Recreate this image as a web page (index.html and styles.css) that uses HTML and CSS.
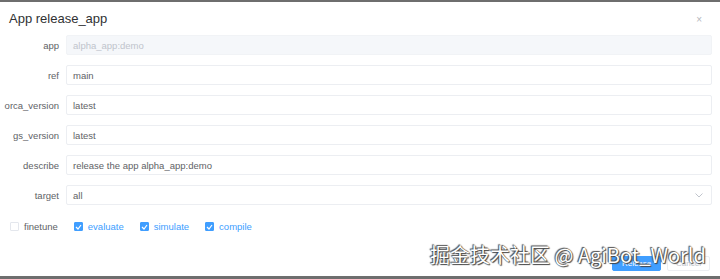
FILE: index.html
```html
<!DOCTYPE html>
<html lang="en">

<head>
    <meta charset="UTF-8">
    <meta name="viewport" content="width=device-width, initial-scale=1.0">
    <title>App release_app</title>
    <link rel="stylesheet" href="styles.css">
</head>

<body>
    <div class="dialog">
        <div class="dialog-header">
            <span class="dialog-title">App release_app</span>
            <span class="dialog-close">&#215;</span>
        </div>
        <form class="release-form">
            <div class="form-row">
                <label>app</label>
                <div class="field disabled">alpha_app:demo</div>
            </div>
            <div class="form-row">
                <label>ref</label>
                <div class="field">main</div>
            </div>
            <div class="form-row">
                <label>orca_version</label>
                <div class="field">latest</div>
            </div>
            <div class="form-row">
                <label>gs_version</label>
                <div class="field">latest</div>
            </div>
            <div class="form-row">
                <label>describe</label>
                <div class="field">release the app alpha_app:demo</div>
            </div>
            <div class="form-row">
                <label>target</label>
                <div class="field select">
                    <span>all</span>
                    <svg class="chevron" width="8" height="5" viewBox="0 0 8 5">
                        <path d="M0.5 0.5 L4 4 L7.5 0.5" fill="none" stroke="#c0c4cc" stroke-width="1"/>
                    </svg>
                </div>
            </div>
            <div class="checks">
                <span class="check"><span class="box"></span>finetune</span>
                <span class="check on"><span class="box"><svg width="7" height="6" viewBox="0 0 7 6"><path d="M1 3 L3 5 L6 1" fill="none" stroke="#fff" stroke-width="1.2"/></svg></span>evaluate</span>
                <span class="check on"><span class="box"><svg width="7" height="6" viewBox="0 0 7 6"><path d="M1 3 L3 5 L6 1" fill="none" stroke="#fff" stroke-width="1.2"/></svg></span>simulate</span>
                <span class="check on"><span class="box"><svg width="7" height="6" viewBox="0 0 7 6"><path d="M1 3 L3 5 L6 1" fill="none" stroke="#fff" stroke-width="1.2"/></svg></span>compile</span>
            </div>
        </form>
        <div class="dialog-footer">
            <button type="button" class="btn primary">Release</button>
            <button type="button" class="btn">Cancel</button>
        </div>
        <div class="watermark">掘金技术社区 @ AgiBot_World</div>
    </div>
</body>

</html>
```

FILE: styles.css
```css
body {
    margin: 0;
    font-family: "Liberation Sans", Arial, sans-serif;
    background-color: #fff;
}

.dialog {
    position: relative;
    height: 279px;
    box-sizing: border-box;
    border-top: 2px solid #6e6e6e;
    border-bottom: 3px solid #6e6e6e;
    background-color: #fff;
}

.dialog-header {
    display: flex;
    justify-content: space-between;
    align-items: center;
    padding: 8px 18px 0 9px;
    height: 17px;
}

.dialog-title {
    font-size: 13px;
    color: #303133;
}

.dialog-close {
    font-size: 10px;
    color: #b4b7bd;
    margin-top: 2px;
}

.release-form {
    padding-top: 8px;
}

.form-row {
    display: flex;
    align-items: center;
    height: 20px;
    margin-bottom: 10px;
}

.form-row label {
    width: 59px;
    padding-right: 7px;
    text-align: right;
    font-size: 9.5px;
    color: #606266;
}

.field {
    flex: 1;
    margin-right: 8px;
    height: 20px;
    box-sizing: border-box;
    border: 1px solid #eceef2;
    border-radius: 2px;
    padding: 0 6px;
    display: flex;
    align-items: center;
    font-size: 9.5px;
    color: #606266;
}

.field.disabled {
    background-color: #f5f7fa;
    border-color: #f1f3f6;
    color: #c0c4cc;
}

.field.select {
    justify-content: space-between;
}

.chevron {
    margin-right: 2px;
}

.checks {
    display: flex;
    align-items: center;
    padding: 6px 0 0 10px;
    gap: 16px;
}

.check {
    display: flex;
    align-items: center;
    font-size: 9.5px;
    color: #606266;
}

.check.on {
    color: #409eff;
}

.check .box {
    width: 9px;
    height: 9px;
    box-sizing: border-box;
    border: 1px solid #e4e7ed;
    border-radius: 1px;
    margin-right: 5px;
    display: flex;
    align-items: center;
    justify-content: center;
}

.check.on .box {
    background-color: #409eff;
    border-color: #409eff;
}

.dialog-footer {
    display: flex;
    justify-content: flex-end;
    gap: 6px;
    padding: 24px 10px 0 0;
}

.btn {
    height: 15px;
    padding: 0 8px;
    font-size: 8px;
    border: 1px solid #eceef2;
    border-radius: 2px;
    background-color: #fff;
    color: #c0c4cc;
    font-family: "Liberation Sans", Arial, sans-serif;
}

.btn.primary {
    width: 49px;
    background-color: #409eff;
    border-color: #409eff;
    color: #fff;
}

.watermark {
    position: absolute;
    left: 430px;
    top: 241px;
    font-family: "Noto Sans CJK SC", "Liberation Sans", sans-serif;
    font-size: 20px;
    line-height: 24px;
    color: #fff;
    text-shadow: 0 0 1px #333, 1px 1px 1px #444, -1px -1px 1px #555;
    white-space: nowrap;
}
```
